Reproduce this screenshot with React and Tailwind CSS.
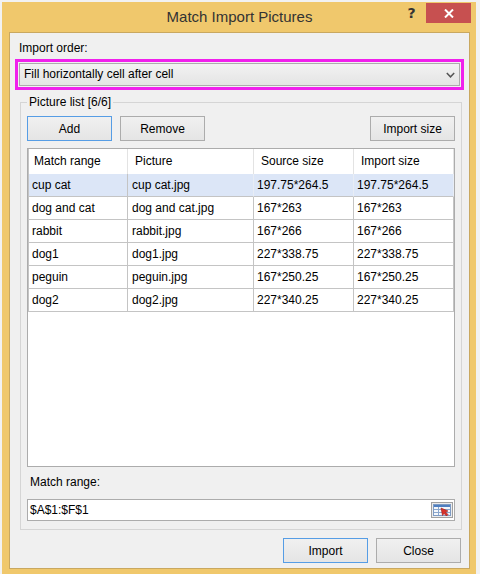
import React from 'react';

const headers = ['Match range', 'Picture', 'Source size', 'Import size'];
const headPad = ['pl-[5px]', 'pl-[7px]', 'pl-[7px]', 'pl-[7px]'];
const cellPad = ['pl-[3px]', 'pl-[4px]', 'pl-[3px]', 'pl-[3px]'];

const rows = [
  ['cup cat', 'cup cat.jpg', '197.75*264.5', '197.75*264.5'],
  ['dog and cat', 'dog and cat.jpg', '167*263', '167*263'],
  ['rabbit', 'rabbit.jpg', '167*266', '167*266'],
  ['dog1', 'dog1.jpg', '227*338.75', '227*338.75'],
  ['peguin', 'peguin.jpg', '167*250.25', '167*250.25'],
  ['dog2', 'dog2.jpg', '227*340.25', '227*340.25'],
];

function Button({ children, primary }) {
  return (
    <button
      className={`h-[25px] w-[85px] border bg-gradient-to-b from-[#f0f0f0] to-[#e5e5e5] text-[12px] leading-none text-black ${
        primary ? 'border-[#569de5]' : 'border-[#acacac]'
      }`}
    >
      {children}
    </button>
  );
}

function RangeIcon() {
  return (
    <svg width="18" height="12" viewBox="0 0 18 12">
      <rect x="0.5" y="0.5" width="17" height="11" fill="#f4f7fb" stroke="#7d9bc4" />
      <rect x="1" y="1" width="16" height="2" fill="#4f7fc0" />
      <line x1="1" y1="5.5" x2="17" y2="5.5" stroke="#8aa6cc" />
      <line x1="1" y1="8.5" x2="17" y2="8.5" stroke="#8aa6cc" />
      <line x1="5.5" y1="3" x2="5.5" y2="11" stroke="#8aa6cc" />
      <path d="M8 4 L15 7 L12.5 8 L15 10.5 L13.5 12 L11 9.5 L9.5 11.5 Z" fill="#d9322b" stroke="#a01a14" strokeWidth="0.6" />
    </svg>
  );
}

export default function App() {
  return (
    <div
      className="w-[480px] h-[574px] bg-[#f2f2f2] pl-[2px] pt-[2px] overflow-hidden"
      style={{ fontFamily: '"Liberation Sans", Arial, sans-serif' }}
    >
      <div className="relative w-[474px] h-[572px] bg-[#f0c86c] pl-[7px] pr-[6px] flex flex-col">
        {/* Title bar */}
        <div className="h-[30px] flex items-center justify-center text-[15px] text-[#333]">
          Match Import Pictures
        </div>
        <div className="absolute top-[1px] right-[5px] flex">
          <span
            className="w-[29px] h-[20px] flex items-center justify-center text-[14px] font-bold text-[#333]"
            style={{ fontFamily: '"DejaVu Sans", sans-serif' }}
          >
            ?
          </span>
          <span className="w-[45px] h-[20px] bg-[#c75050] flex items-center justify-center">
            <svg width="10" height="9" viewBox="0 0 10 9">
              <path d="M1 0.5 L9 8.5 M9 0.5 L1 8.5" stroke="#fff" strokeWidth="2" />
            </svg>
          </span>
        </div>

        {/* Client area */}
        <div className="h-[537px] border border-[#c9a860] bg-[#f0f0f0] text-[12px] leading-[15px] text-black">
          <div className="pt-[8px] pl-[9px]">Import order:</div>

          <div className="mt-[3px] ml-[5px] mr-[5px] border-[3px] border-[#f020ec] p-[1px]">
            <div className="h-[23px] border border-[#acacac] bg-gradient-to-b from-[#f2f2f2] to-[#e4e4e4] flex items-center justify-between pl-[4px] pr-[4px]">
              <span>Fill horizontally cell after cell</span>
              <svg width="9" height="6" viewBox="0 0 9 6">
                <path d="M0.8 1 L4.5 4.8 L8.2 1" fill="none" stroke="#555" strokeWidth="1.5" />
              </svg>
            </div>
          </div>

          <fieldset className="mt-[5px] ml-[10px] mr-[7px] border border-[#d5d5d5] pl-[6px] pr-[6px] pt-[6px] pb-[8px]">
            <legend className="px-[2px] leading-[15px]">Picture list [6/6]</legend>

            <div className="flex gap-[8px]">
              <Button primary>Add</Button>
              <Button>Remove</Button>
              <div className="flex-1" />
              <Button>Import size</Button>
            </div>

            <div className="mt-[7px] h-[319px] border border-[#acacac] bg-white">
              <div className="grid grid-cols-[100px_126px_100px_100px] h-[25px]">
                {headers.map((h, i) => (
                  <div
                    key={h}
                    className={`flex items-center border-r border-[#e3e3e3] ${headPad[i]} ${
                      i === 0 ? 'border-l border-l-[#c4c4c4]' : ''
                    }`}
                  >
                    {h}
                  </div>
                ))}
              </div>
              {rows.map((r, ri) => (
                <div
                  key={ri}
                  className={`grid grid-cols-[100px_126px_100px_100px] h-[23px] ${
                    ri === 0 ? 'bg-[#dce6f7]' : ''
                  }`}
                >
                  {r.map((c, i) => (
                    <div
                      key={i}
                      className={`flex items-center border-b border-r border-[#c4c4c4] ${cellPad[i]} ${
                        i === 0 ? 'border-l' : ''
                      } ${ri === 0 && i > 0 ? 'border-r-[#e8edf5]' : ''}`}
                    >
                      {c}
                    </div>
                  ))}
                </div>
              ))}
            </div>

            <div className="mt-[8px] pl-[3px]">Match range:</div>

            <div className="mt-[9px] h-[22px] border border-[#acacac] bg-white flex items-center justify-between pl-[2px] pr-[1px]">
              <span>$A$1:$F$1</span>
              <span className="w-[22px] h-[16px] border border-[#a0a0a0] bg-[#ececec] flex items-center justify-center">
                <RangeIcon />
              </span>
            </div>
          </fieldset>

          <div className="mt-[8px] mr-[8px] flex justify-end gap-[8px]">
            <Button primary>Import</Button>
            <Button>Close</Button>
          </div>
        </div>
      </div>
    </div>
  );
}
